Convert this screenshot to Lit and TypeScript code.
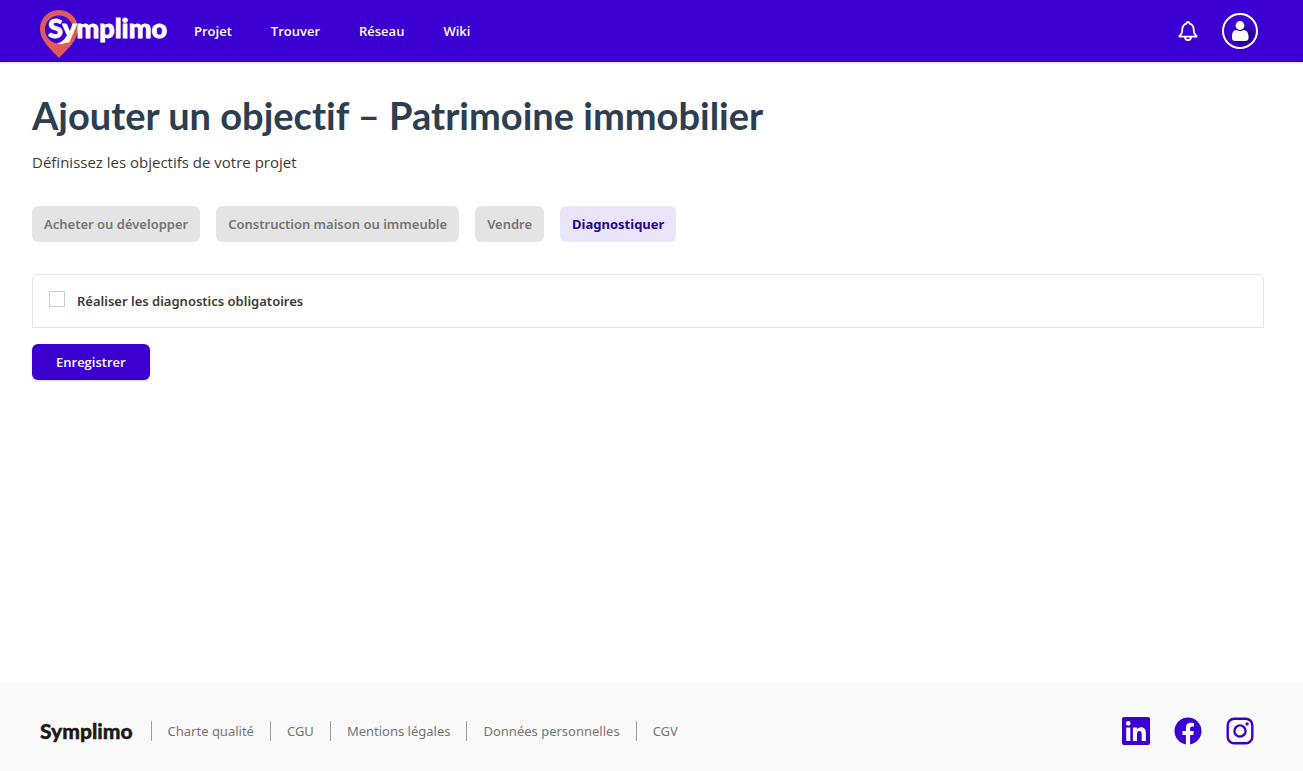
import { LitElement, html, css, svg } from "lit";
import { customElement, state } from "lit/decorators.js";

const NAV = ["Projet", "Trouver", "Réseau", "Wiki"];
const TABS = ["Acheter ou développer", "Construction maison ou immeuble", "Vendre", "Diagnostiquer"];
const LEGAL = ["Charte qualité", "CGU", "Mentions légales", "Données personnelles", "CGV"];

const SOCIAL = [
  {
    name: "LinkedIn",
    shape: svg`<path fill-rule="evenodd" d="M2 0H26Q28 0 28 2V26Q28 28 26 28H2Q0 28 0 26V2Q0 0 2 0ZM4.200 10.500V23.900H8.300V10.500ZM6.250 3.900A2.400 2.400 0 1 0 6.250 8.700A2.400 2.400 0 1 0 6.250 3.900ZM10.900 10.500V23.900H15V17.200C15 15.300 15.600 13.900 17.500 13.900C19.300 13.900 19.700 15.300 19.700 17.300V23.900H23.900V16.500C23.900 12.500 22.600 10.200 18.900 10.200C17 10.200 15.600 11.200 14.900 12.400V10.500Z"/>`,
  },
  {
    name: "Facebook",
    shape: svg`<g transform="translate(.5 .5) scale(1.125)"><path d="M24 12.073c0-6.627-5.373-12-12-12s-12 5.373-12 12c0 5.990 4.388 10.954 10.125 11.854v-8.385H7.078v-3.470h3.047V9.430c0-3.007 1.792-4.669 4.533-4.669 1.312 0 2.686.235 2.686.235v2.953H15.830c-1.491 0-1.956.925-1.956 1.874v2.250h3.328l-.532 3.470h-2.796v8.385C19.612 23.027 24 18.062 24 12.073z"/></g>`,
  },
  {
    name: "Instagram",
    shape: svg`<g fill="none" stroke="currentColor" stroke-width="2.400"><rect x="1.700" y="1.700" width="24.600" height="24.600" rx="6.500"/><circle cx="14" cy="14" r="5.600"/></g><circle cx="21.100" cy="6.900" r="1.700"/>`,
  },
];

@customElement("app-root")
export class AppRoot extends LitElement {
  @state() private active = "Diagnostiquer";

  static styles = css`
    :host {
      display: flex;
      flex-direction: column;
      min-height: 100vh;
      background: #fff;
      color: #3b3a39;
      font-family: "Noto Sans", "Open Sans", sans-serif;
      font-size: 13px;
      line-height: 20px;
    }
    * { box-sizing: border-box; }
    a { color: inherit; text-decoration: none; }
    button { border: 0; font: inherit; cursor: pointer; }
    .top {
      display: flex;
      align-items: center;
      height: 62px;
      padding: 0 45px 0 40px;
      background: #3b00d1;
      color: #fff;
      box-shadow: 0 1px 2px rgba(0, 0, 0, 0.15);
    }
    .logo { display: block; width: 130px; height: 48px; margin-top: 5px; }
    .logo svg { display: block; overflow: visible; }
    .logo text {
      font-family: Lato, sans-serif;
      font-weight: 900;
      font-size: 27px;
      fill: #fff;
      stroke: #fff;
      stroke-width: 0.8px;
    }
    .nav, .save { font-family: "Open Sans", "Noto Sans", sans-serif; font-weight: 600; }
    .nav { display: flex; gap: 39px; margin-left: 24px; }
    .tools { display: flex; align-items: center; gap: 24px; margin-left: auto; }
    .icon-button { display: block; padding: 0; background: none; color: #fff; }
    .icon-button svg { display: block; }
    main { flex: 1; padding: 32px 39px 32px 32px; }
    h1 {
      margin: 0;
      color: #2c3e50;
      font: 700 38px/42px Lato, sans-serif;
      font-variant-ligatures: none;
    }
    .intro {
      margin: 16px 0 34px;
      font-family: "Open Sans", "Noto Sans", sans-serif;
      font-size: 15px;
      line-height: 20px;
    }
    .tabs { display: flex; flex-wrap: wrap; gap: 16px; }
    .tab {
      height: 36px;
      padding: 0 12px;
      border-radius: 6px;
      background: #e4e4e4;
      color: #757575;
      font-weight: 600;
    }
    .tab.active { background: #eae5fb; color: #2a0094; font-weight: 700; }
    .card {
      display: flex;
      align-items: center;
      gap: 12px;
      margin: 32px 0 16px;
      padding: 16px;
      border: 1px solid #e4e4e4;
      border-radius: 6px 6px 0 0;
      font-weight: 600;
    }
    .check {
      appearance: none;
      width: 16px;
      height: 16px;
      margin: 0 0 4px;
      border: 1px solid #ccc;
      background: #fff;
    }
    .check:checked { background: #3b00d1; }
    .save {
      height: 36px;
      padding: 0 24px;
      border-radius: 6px;
      background: #3b00d1;
      color: #fff;
      box-shadow: 0 1px 2px rgba(0, 0, 0, 0.15);
    }
    footer {
      display: flex;
      align-items: center;
      min-height: 88px;
      padding: 8px 49px 0 40px;
      background: #fafafa;
      color: #757575;
    }
    .brand { color: #1b1a19; font: 900 21px/20px Lato, sans-serif; -webkit-text-stroke: 0.4px #1b1a19; }
    .legal { display: flex; margin-left: 18px; }
    .legal a { padding: 0 16px; border-left: 1px solid #a0a0a0; }
    .social { display: flex; gap: 24px; margin-left: auto; color: #3b00d1; }
    .social svg { display: block; fill: currentColor; }
  `;

  render() {
    return html`
      <header class="top">
        <a class="logo" href="#" aria-label="Symplimo">
          <svg width="130" height="48" viewBox="0 0 130 48">
            <path fill="#df5b5b" fill-rule="evenodd" d="M19 0C8.500 0 0 8.300 0 18.700C0 31 11 39 19 48C27 39 38 31 38 18.700C38 8.300 29.500 0 19 0ZM19 5.500A14 14 0 1 1 19 33.500A14 14 0 1 1 19 5.500Z"/>
            <path fill="#fff" d="M17 33.700Q23 32 26.500 26L31 27Q27.500 34 20 34.200Z"/>
            <text x="8" y="28">Symplimo</text>
          </svg>
        </a>
        <nav class="nav">${NAV.map((n) => html`<a href="#">${n}</a>`)}</nav>
        <div class="tools">
          <button class="icon-button" aria-label="Notifications">
            <svg width="20" height="20" viewBox="0 0 20 20" fill="none" stroke="currentColor" stroke-width="1.800" stroke-linejoin="round">
              <path d="M1.500 15.700V15Q4.300 12.700 4.300 9.500V8Q4.600 3.600 8.500 2.600Q8.500 1 10 1Q11.500 1 11.500 2.600Q15.400 3.600 15.700 8V9.500Q15.700 12.700 18.500 15V15.700Z"/>
              <path d="M7 15.700Q7.200 19.200 10 19.200Q12.800 19.200 13 15.700"/>
            </svg>
          </button>
          <button class="icon-button" aria-label="Mon compte">
            <svg width="36" height="36" viewBox="0 0 36 36">
              <path fill="#2b0099" d="M21 9L33 20.500A16 16 0 0 1 17 33.500L11 27Z"/>
              <circle cx="18" cy="18" r="17" fill="none" stroke="#fff" stroke-width="2"/>
              <circle cx="18" cy="12.500" r="4.400" fill="#fff"/>
              <path fill="#fff" d="M10 25V23Q10 17 14.500 17Q18 19.200 21.500 17Q26 17 26.500 23V25Q26.500 28 23 28H13Q10 28 10 25Z"/>
            </svg>
          </button>
        </div>
      </header>
      <main>
        <h1>Ajouter un objectif – Patrimoine immobilier</h1>
        <p class="intro">Définissez les objectifs de votre projet</p>
        <div class="tabs" role="tablist">
          ${TABS.map((t) => html`<button
            class="tab ${t === this.active ? "active" : ""}"
            role="tab"
            aria-selected=${t === this.active}
            @click=${() => (this.active = t)}
          >${t}</button>`)}
        </div>
        <div class="card">
          <input class="check" id="diagnostics" type="checkbox" />
          <label for="diagnostics">Réaliser les diagnostics obligatoires</label>
        </div>
        <button class="save">Enregistrer</button>
      </main>
      <footer>
        <a class="brand" href="#">Symplimo</a>
        <nav class="legal">${LEGAL.map((l) => html`<a href="#">${l}</a>`)}</nav>
        <div class="social">
          ${SOCIAL.map((s) => html`<a href="#" aria-label=${s.name}><svg width="28" height="28" viewBox="0 0 28 28">${s.shape}</svg></a>`)}
        </div>
      </footer>
    `;
  }
}
